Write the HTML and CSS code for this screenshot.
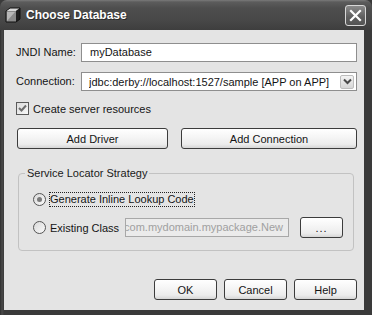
FILE: index.html
```html
<!DOCTYPE html>
<html>
<head>
<meta charset="utf-8">
<link rel="stylesheet" href="styles.css">
</head>
<body>
<div class="window">
  <div class="titlebar">
    <svg class="app-icon" width="16" height="16" viewBox="0 0 16 16">
      <path d="M1 4 L5 1 L15 1 L11 4 Z" fill="#d8d8d8"/>
      <path d="M11 4 L15 1 L15 12 L11 15 Z" fill="#1e1e1e"/>
      <rect x="1" y="4" width="10" height="11" fill="#8a8a8a"/>
      <path d="M2 5 L10 5 L2 14 Z" fill="#b8b8b8"/>
      <path d="M1 4 L5 1 L15 1 L15 12 L11 15 L1 15 Z" fill="none" stroke="#111" stroke-width="1"/>
    </svg>
    <span class="title">Choose Database</span>
    <button class="close-btn" aria-label="Close">
      <svg width="13" height="13" viewBox="0 0 13 13"><path d="M2 2 L11 11 M11 2 L2 11" stroke="#fff" stroke-width="2.2" stroke-linecap="square"/></svg>
    </button>
  </div>
  <div class="client">
    <div class="form-grid">
      <label class="lbl">JNDI Name:</label>
      <div class="field">myDatabase</div>
      <label class="lbl">Connection:</label>
      <div class="combo">
        <span class="combo-text">jdbc:derby://localhost:1527/sample [APP on APP]</span>
        <span class="combo-btn">
          <svg width="9" height="7" viewBox="0 0 9 7"><path d="M1 1.5 L4.5 5 L8 1.5" fill="none" stroke="#4a4a4a" stroke-width="2"/></svg>
        </span>
      </div>
    </div>
    <div class="check-row">
      <span class="checkbox">
        <svg width="11" height="11" viewBox="0 0 11 11"><path d="M2 5 L4.5 7.5 L9 2.5" fill="none" stroke="#6e6e6e" stroke-width="2"/></svg>
      </span>
      <span>Create server resources</span>
    </div>
    <div class="btn-row">
      <button class="btn">Add Driver</button>
      <button class="btn">Add Connection</button>
    </div>
    <fieldset class="group">
      <legend>Service Locator Strategy</legend>
      <div class="radio-row first">
        <span class="radio checked"></span>
        <span class="focus-label">Generate Inline Lookup Code</span>
      </div>
      <div class="radio-row">
        <span class="radio"></span>
        <span class="rlabel">Existing Class</span>
        <div class="field disabled"><span>com.mydomain.mypackage.New</span></div>
        <button class="btn dots">...</button>
      </div>
    </fieldset>
    <div class="footer">
      <button class="btn small">OK</button>
      <button class="btn small">Cancel</button>
      <button class="btn small">Help</button>
    </div>
  </div>
</div>
</body>
</html>
```

FILE: styles.css
```css
* { box-sizing: border-box; }
html, body {
  margin: 0;
  padding: 0;
  width: 372px;
  height: 315px;
  overflow: hidden;
  background: #3a3a3a;
}
body {
  font-family: "Liberation Sans", Arial, sans-serif;
  font-size: 11px;
  color: #141414;
}
.window {
  width: 372px;
  height: 315px;
  display: flex;
  flex-direction: column;
  background: linear-gradient(to right, #2e2e2e 0, #4a4a4a 2px, #3a3a3a 4px);
  border-radius: 7px 7px 0 0;
  padding: 0 8px 5px 4px;
}
.titlebar {
  height: 30px;
  margin: 0 -8px 0 -4px;
  display: flex;
  align-items: center;
  padding: 0 6px 0 5px;
  border-radius: 7px 7px 0 0;
  background: linear-gradient(to bottom, #7a7a7a 0, #5c5c5c 2px, #4e4e4e 8px, #484848 20px, #3e3e3e 30px);
}
.app-icon {
  flex: none;
}
.title {
  margin-left: 5px;
  color: #fff;
  font-weight: bold;
  font-size: 12px;
  flex: 1;
  text-shadow: 1px 1px 0 #2a2a2a;
}
.close-btn {
  width: 21px;
  height: 21px;
  padding: 0;
  border: 1px solid #d8d8d8;
  border-radius: 3px;
  background: linear-gradient(to bottom, #8a8a8a, #5e5e5e 60%, #545454);
  display: flex;
  align-items: center;
  justify-content: center;
}
.client {
  flex: 1;
  background: #e4e4e4;
  display: flex;
  flex-direction: column;
  padding: 13px 7px 10px 12px;
}
.form-grid {
  display: grid;
  grid-template-columns: 65px 1fr;
  row-gap: 10px;
  align-items: center;
}
.lbl {
  line-height: 19px;
}
.field {
  height: 19px;
  background: #fff;
  border: 1px solid #8e8e8e;
  padding: 0 6px 0 8px;
  line-height: 17px;
  white-space: nowrap;
  overflow: hidden;
}
.combo {
  height: 19px;
  background: #fff;
  border: 1px solid #8e8e8e;
  display: flex;
  align-items: center;
  padding: 0 2px 0 7px;
}
.combo-text {
  flex: 1;
  white-space: nowrap;
  overflow: hidden;
}
.combo-btn {
  width: 14px;
  height: 14px;
  border: 1px solid #bdbdbd;
  border-radius: 2px;
  background: linear-gradient(to bottom, #f4f4f4, #d6d6d6);
  display: flex;
  align-items: center;
  justify-content: center;
}
.check-row {
  margin-top: 11px;
  display: flex;
  align-items: center;
  height: 13px;
}
.checkbox {
  width: 13px;
  height: 13px;
  border: 1px solid #5a5a5a;
  background: linear-gradient(135deg, #dcdcdc, #f8f8f8);
  display: flex;
  align-items: center;
  justify-content: center;
  margin-right: 4px;
}
.btn-row {
  margin-top: 13px;
  display: grid;
  grid-template-columns: 151px 1fr;
  column-gap: 13px;
  padding-left: 1px;
}
.btn {
  height: 21px;
  font-family: "Liberation Sans", Arial, sans-serif;
  font-size: 11px;
  color: #141414;
  border: 1px solid #3c3c3c;
  border-radius: 3px;
  background: linear-gradient(to bottom, #ffffff 0, #f6f6f6 40%, #ececec 80%, #d6d6d6 100%);
  padding: 0;
}
.group {
  margin: 18px 3px 0 2px;
  border: 1px solid #c2c2c2;
  border-radius: 4px;
  padding: 9px 10px 12px 14px;
  min-width: 0;
}
.group legend {
  padding: 0 2px;
  margin-left: -8px;
  line-height: 13px;
  color: #1a1a1a;
}
.radio-row {
  display: flex;
  align-items: center;
  height: 21px;
  margin-top: 7px;
}
.radio-row.first {
  margin-top: 0;
}
.radio {
  width: 13px;
  height: 13px;
  border-radius: 50%;
  border: 1px solid #555;
  background: linear-gradient(135deg, #d8d8d8, #fafafa);
  margin-right: 3px;
  display: flex;
  align-items: center;
  justify-content: center;
}
.radio.checked::after {
  content: "";
  width: 5px;
  height: 5px;
  border-radius: 50%;
  background: #7a7a7a;
}
.focus-label {
  border: 1px dotted #222;
  line-height: 13px;
}
.rlabel {
  width: 76px;
  padding-left: 1px;
}
.field.disabled {
  width: 164px;
  background: #ebebeb;
  border-color: #a8a8a8;
  color: #a0a0a0;
  display: flex;
  justify-content: flex-end;
  padding: 0 5px 0 2px;
}
.field.disabled span {
  flex: none;
}
.btn.dots {
  width: 43px;
  margin-left: 11px;
  letter-spacing: 1px;
}
.footer {
  margin-top: auto;
  display: flex;
  justify-content: flex-end;
  gap: 7px;
}
.btn.small {
  width: 63px;
}
```
